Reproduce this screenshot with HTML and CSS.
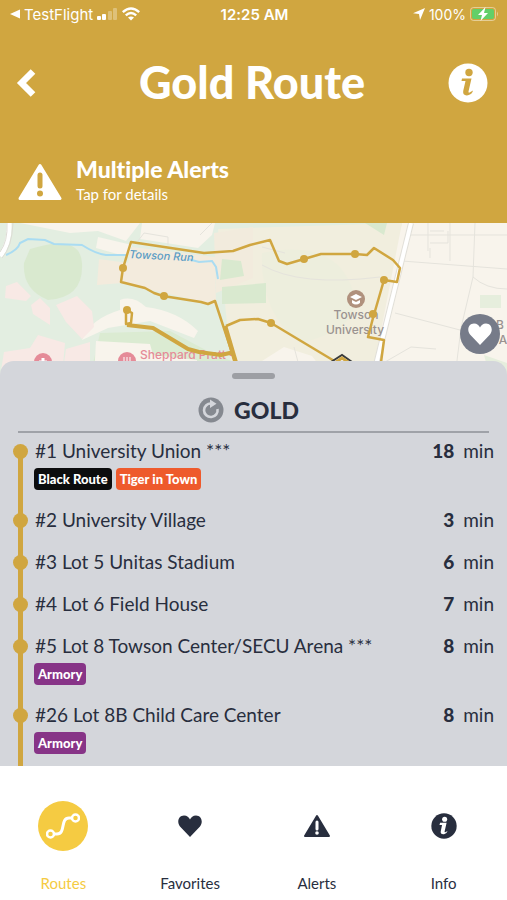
FILE: index.html
```html
<!DOCTYPE html>
<html lang="en">
<head>
    <meta charset="UTF-8">
    <meta name="viewport" content="width=device-width, initial-scale=1.0">
    <title>Gold Route</title>
    <link rel="stylesheet" href="styles.css">
</head>
<body>
    <header class="header">
        <div class="status-bar">
            <div class="status-left">
                <svg width="10" height="10" viewBox="0 0 10 10"><path d="M0 5L10 0.5V9.5Z" fill="#fff"/></svg>
                <span>TestFlight</span>
                <svg width="21" height="14" viewBox="0 0 21 14" fill="#fff">
                    <rect x="0" y="9" width="4" height="4" rx="1"/>
                    <rect x="5" y="7" width="4" height="6" rx="1"/>
                    <rect x="11" y="4" width="4" height="9" rx="1" opacity=".3"/>
                    <rect x="16" y="1" width="4" height="12" rx="1" opacity=".3"/>
                </svg>
                <svg width="18" height="14" viewBox="0 0 18 14" fill="none" stroke="#fff" stroke-width="2.4">
                    <path d="M0.8 5.2Q9 -2.4 17.2 5.2"/>
                    <path d="M3.8 8.4Q9 3.6 14.2 8.4"/>
                    <path d="M6 10.6Q9 8.4 12 10.6L9 13.6Z" fill="#fff" stroke="none"/>
                </svg>
            </div>
            <div class="status-time">12:25 AM</div>
            <div class="status-right">
                <svg width="12" height="12" viewBox="0 0 12 12"><path d="M12 0L7 12L6 6L0 5.2Z" fill="#fff"/></svg>
                <span>100%</span>
                <svg width="29" height="14" viewBox="0 0 29 14">
                    <rect x="0.5" y="0.5" width="25" height="13" rx="3" fill="none" stroke="#fff" opacity=".45"/>
                    <rect x="2" y="2" width="22" height="10" rx="2" fill="#62cf68"/>
                    <path d="M27 4.5Q29 7 27 9.5Z" fill="#fff" opacity=".45"/>
                    <path d="M15.5 0L8 8H12L10.5 14L18 6H14Z" fill="#fff"/>
                </svg>
            </div>
        </div>
        <div class="title-bar">
            <button class="icon-button" aria-label="Back">
                <svg width="20" height="28" viewBox="0 0 20 28" fill="none" stroke="#fff" stroke-width="6.500"><path d="M17 2.500L5.500 14L17 25.500"/></svg>
            </button>
            <h1>Gold Route</h1>
            <button class="icon-button" aria-label="Route info">
                <svg width="40" height="40" viewBox="0 0 40 40">
                    <circle cx="20" cy="20" r="19.500" fill="#fff"/>
                    <g fill="#d0a640"><circle cx="21" cy="9.500" r="3.700"/><path d="M14 15.500H23.500L20.500 28.500Q20.300 30 21.500 29.500L25 27.500Q24.500 31 20 32.300Q14.500 33 15.200 28L17.500 18H13.500Z"/></g>
                </svg>
            </button>
        </div>
        <a class="alert" href="#alerts">
            <svg width="44" height="38" viewBox="0 0 44 38">
                <path d="M22 2.500L42 35.500H2Z" fill="#fff" stroke="#fff" stroke-width="3" stroke-linejoin="round"/>
                <path d="M22 12V23" stroke="#d0a640" stroke-width="5" stroke-linecap="round"/>
                <circle cx="22" cy="30.500" r="3" fill="#d0a640"/>
            </svg>
            <span class="alert-text">
                <strong>Multiple Alerts</strong>
                <span>Tap for details</span>
            </span>
        </a>
    </header>

    <section class="map">
        <svg class="map-canvas" viewBox="0 0 507 154" preserveAspectRatio="xMidYMin slice" aria-label="Route map">
            <rect width="507" height="154" fill="#f8f4ec"/>
            <!-- campus and parks -->
            <path d="M0 0H402L360 154H0Z" fill="#e3eee1"/>
            <path d="M218 6L402 0L372 154H232Z" fill="#f1eede"/>
            <path d="M132 24L215 34L216 82L122 60L97 62L99 36L128 40Z" fill="#f3ebdd"/>
            <path d="M214 10L253 4V55L216 70Z" fill="#f2ebdd"/>
            <path d="M262 30Q330 16 350 60T300 120Q260 90 262 30Z" fill="#edeedd"/>
            <path d="M30 26Q80 10 82 40Q84 75 48 77Q22 66 24 40Z" fill="#d9e9cf"/>
            <path d="M222 36L241 38L244 53L220 57ZM222 64L266 60V80L222 81ZM365 0H387L384 12Z" fill="#d9e9cf"/>
            <path d="M100 110L170 108L215 132L232 138V154H90Z" fill="#dbebd2"/>
            <path d="M20 0H140L126 18L98 8L70 10Z" fill="#f8f4ec"/>
            <path d="M98 14L132 22L128 34L96 25ZM142 0H215L212 12L198 25L140 16Z" fill="#f8f4ec"/>
            <path d="M120 77Q133 72 146 84Q178 88 198 108L194 115L150 98L108 105L82 117Q90 96 120 87Z" fill="#f8f4ec"/>
            <path d="M96 118L150 121L153 132L197 137V154H94ZM262 138L284 124L312 133L328 154H262Z" fill="#f8f4ec"/>
            <path d="M6 63L17 59L31 73L26 78L5 75ZM31 82L40 75L50 85V102L33 91ZM56 82L77 73L92 88L94 104L82 116L66 99ZM4 129L30 125L38 112L65 120L62 154H0ZM66 126L90 119V154H62Z" fill="#f8e9e5"/>
            <path d="M480 72H501V85H480ZM484 132L507 140V154H490Z" fill="#e6eedd"/>
            <!-- side streets -->
            <path d="M9 0Q10 20 0 33" fill="none" stroke="#fff" stroke-width="5"/>
            <path d="M7 0Q8 18 0 29M13 0Q12 24 2 35" fill="none" stroke="#dddcd5" stroke-width="1"/>
            <g fill="none" stroke="#e5e3dc" stroke-width="1">
                <path d="M411 12H507M402 38L507 46M473 54Q486 66 507 66M395 90L460 107M385 139L411 124L436 126M428 0V28M450 0V38M430 20H448V8M475 0L473 54L461 105L455 154M138 18L144 10L168 14V22M262 24L285 30M212 0L200 12"/>
                <path d="M262 42Q300 64 380 54M294 124L302 154"/>
                <path d="M430 8H444M430 25V35"/>
            </g>
            <path d="M411 0L373 154" stroke="#e1dfd8" stroke-width="6"/>
            <path d="M411 0L373 154" stroke="#fff" stroke-width="4"/>
            <path d="M6 32Q18 27 20 20L28 16L45 17L54 21L82 22Q96 31 106 32H128M188 36L199 39L212 38L216 44L218 56" fill="none" stroke="#aadcf2" stroke-width="2"/>
            <text class="map-water" x="129" y="35" transform="rotate(3 129 35)">Towson Run</text>
            <text class="map-hospital" x="140" y="136">Sheppard Pratt -</text>
            <circle cx="43" cy="139" r="9" fill="#e58b98"/><path d="M43 135V145M39 139H47" stroke="#fff" stroke-width="3"/>
            <circle cx="127" cy="138" r="9" fill="#e58b98"/><path d="M124 134V140M127 134V142M130 134V140" stroke="#fff" stroke-width="1"/>
            <circle cx="356" cy="76" r="9" fill="#b0917d"/>
            <path d="M350 74L356 71L362 74L356 77ZM352 77L356 79L360 77V80Q356 83 352 80Z" fill="#fff"/>
            <g class="map-place"><text x="356" y="96">Towson</text><text x="355" y="111">University</text></g>
            <g class="map-place"><text x="500" y="106">B</text><text x="503" y="121">A</text></g>
            <!-- gold route -->
            <g fill="none" stroke="#d0a640" stroke-width="2.500" stroke-linejoin="round">
                <path d="M240 154L215 78L208 81L201 79L163 73L154 70L145 65L121 59L123 45L131 19L204 30L233 28L250 22L270 17L279 38L287 41L304 36L321 31L355 31L367 32L374 25L393 37L400 45L397 59L384 57L373 95L368 114L384 117L379 154"/>
                <path d="M226 103L240 97L258 96L271 100L336 139" />
                <path d="M127 87L132 90L131 100L126 101V88"/>
                <path d="M127 102L153 105L188 126L199 129L221 132L234 129" stroke-width="4"/>
                <path d="M225 103L240 154" stroke-width="4.500"/>
            </g>
            <path d="M331 139L342 132L352 139V154H331Z" fill="#f8f4ec" stroke="#3a3c3c" stroke-width="2"/>
            <path d="M333 141L342 135L351 141" fill="none" stroke="#d0a640" stroke-width="3"/>
            <g fill="#d0a640">
                <circle cx="123" cy="45" r="4"/><circle cx="164" cy="73" r="4"/><circle cx="127" cy="87" r="4"/>
                <circle cx="304" cy="36" r="4"/><circle cx="355" cy="31" r="4"/><circle cx="384" cy="57" r="4"/>
                <circle cx="373" cy="91" r="4"/><circle cx="271" cy="100" r="4"/>
            </g>
        </svg>
        <button class="favorite" aria-label="Add to favorites">
            <svg width="24" height="22" viewBox="0 0 24 22"><path d="M12 22L2 11.500C-1.500 7 0.500 0.500 6 0.500C9 0.500 11 2.500 12 4.500C13 2.500 15 0.500 18 0.500C23.500 0.500 25.500 7 22 11.500Z" fill="#fff"/></svg>
        </button>
    </section>

    <main class="sheet">
        <div class="handle"></div>
        <div class="sheet-title">
            <svg width="26" height="26" viewBox="0 0 26 26">
                <circle cx="13" cy="13" r="12.500" fill="#858990"/>
                <path d="M13.500 6.500A6.800 6.800 0 1 0 19.500 12" fill="none" stroke="#d4d6db" stroke-width="2.600"/>
                <path d="M12 2.500L18.500 6.800L12 11Z" fill="#d4d6db"/>
            </svg>
            <h2>GOLD</h2>
        </div>
        <ul class="stops">
            <li class="stop">
                <div class="track"></div>
                <div class="stop-info">
                    <div class="stop-name">#1 University Union ***</div>
                    <div class="tags"><span class="tag black">Black Route</span><span class="tag orange">Tiger in Town</span></div>
                </div>
                <div class="eta"><b>18</b> min</div>
            </li>
            <li class="stop">
                <div class="track"></div>
                <div class="stop-info"><div class="stop-name">#2 University Village</div></div>
                <div class="eta"><b>3</b> min</div>
            </li>
            <li class="stop">
                <div class="track"></div>
                <div class="stop-info"><div class="stop-name">#3 Lot 5 Unitas Stadium</div></div>
                <div class="eta"><b>6</b> min</div>
            </li>
            <li class="stop">
                <div class="track"></div>
                <div class="stop-info"><div class="stop-name">#4 Lot 6 Field House</div></div>
                <div class="eta"><b>7</b> min</div>
            </li>
            <li class="stop">
                <div class="track"></div>
                <div class="stop-info">
                    <div class="stop-name">#5 Lot 8 Towson Center/SECU Arena ***</div>
                    <div class="tags"><span class="tag purple">Armory</span></div>
                </div>
                <div class="eta"><b>8</b> min</div>
            </li>
            <li class="stop">
                <div class="track"></div>
                <div class="stop-info">
                    <div class="stop-name">#26 Lot 8B Child Care Center</div>
                    <div class="tags"><span class="tag purple">Armory</span></div>
                </div>
                <div class="eta"><b>8</b> min</div>
            </li>
        </ul>
    </main>

    <nav class="tabs">
        <a class="tab active" href="#routes">
            <span class="tab-icon">
                <svg width="34" height="26" viewBox="0 0 34 26" fill="none" stroke="#fff" stroke-width="2.500">
                    <circle cx="4.500" cy="21" r="3.500"/><circle cx="29.500" cy="5" r="3.500"/>
                    <path d="M8 21H11C20 21 14 5 23 5H26" stroke-width="3"/>
                </svg>
            </span>
            Routes
        </a>
        <a class="tab" href="#favorites">
            <span class="tab-icon">
                <svg width="26" height="22" viewBox="0 0 24 22"><path d="M12 22L2 11.500C-1.500 7 0.500 0.500 6 0.500C9 0.500 11 2.500 12 4.500C13 2.500 15 0.500 18 0.500C23.500 0.500 25.500 7 22 11.500Z" fill="#282e3e"/></svg>
            </span>
            Favorites
        </a>
        <a class="tab" href="#alerts">
            <span class="tab-icon">
                <svg width="28" height="24" viewBox="0 0 28 24">
                    <path d="M14 2L26 22H2Z" fill="#282e3e" stroke="#282e3e" stroke-width="2" stroke-linejoin="round"/>
                    <path d="M14 8V15" stroke="#fff" stroke-width="3" stroke-linecap="round"/>
                    <circle cx="14" cy="19" r="1.800" fill="#fff"/>
                </svg>
            </span>
            Alerts
        </a>
        <a class="tab" href="#info">
            <span class="tab-icon">
                <svg width="26" height="26" viewBox="0 0 40 40">
                    <circle cx="20" cy="20" r="19.500" fill="#282e3e"/>
                    <g fill="#fff"><circle cx="21" cy="9.500" r="3.900"/><path d="M14 15H24L21 28Q20.500 30 22 29.500L25.500 27.500Q24.500 31.500 20 32.500Q14 33 15 28L17 18.500H13Z"/></g>
                </svg>
            </span>
            Info
        </a>
    </nav>
</body>
</html>
```

FILE: styles.css
```css
* {
    box-sizing: border-box;
}

body {
    margin: 0;
    min-height: 100vh;
    display: flex;
    flex-direction: column;
    font-family: Lato, sans-serif;
    font-variant-ligatures: none;
    color: #282e3e;
    background-color: #fff;
}

svg {
    display: block;
    flex-shrink: 0;
}

h1, h2, ul {
    margin: 0;
    padding: 0;
}

a {
    text-decoration: none;
}

button {
    border: 0;
    padding: 0;
    cursor: pointer;
}

.header {
    background-color: #d0a640;
    color: #fff;
}

.status-bar {
    display: grid;
    grid-template-columns: 1fr auto 1fr;
    align-items: center;
    height: 28px;
    padding: 0 8px 0 10px;
    font-family: Inter, sans-serif;
    font-size: 15px;
}

.status-left,
.status-right {
    display: flex;
    align-items: center;
    gap: 4px;
}

.status-right {
    justify-content: flex-end;
    font-size: 14px;
}

.status-time {
    font-weight: 600;
}

.title-bar {
    display: flex;
    align-items: center;
    justify-content: space-between;
    height: 110px;
    padding: 0 19px 0 16px;
}

.title-bar h1 {
    padding-bottom: 2px;
    font-size: 45px;
    font-weight: 900;
    line-height: 52px;
}

.icon-button {
    display: flex;
    width: 40px;
    background: none;
}

.alert {
    display: flex;
    align-items: center;
    gap: 14px;
    height: 85px;
    padding: 3px 18px 0;
    color: #fff;
}

.alert-text {
    display: flex;
    flex-direction: column;
    padding-bottom: 4px;
    font-size: 15px;
    line-height: 22px;
}

.alert-text strong {
    font-size: 23px;
    font-weight: 900;
    line-height: 28px;
}

.map {
    position: relative;
    height: 154px;
}

.map-canvas {
    width: 100%;
    height: 100%;
}

.map-canvas text {
    font-family: Inter, sans-serif;
    font-size: 12px;
    font-weight: 500;
}

.map-canvas .map-water {
    fill: #5a9cc4;
    font-size: 11px;
    font-style: italic;
}

.map-hospital {
    fill: #e58b98;
}

.map-place {
    fill: #9a9290;
    text-anchor: middle;
}

.favorite {
    position: absolute;
    top: 91px;
    right: 7px;
    display: flex;
    align-items: center;
    justify-content: center;
    width: 40px;
    height: 40px;
    border-radius: 50%;
    background-color: #767b89;
}

.sheet {
    position: relative;
    flex: 1;
    display: flex;
    flex-direction: column;
    margin-top: -16px;
    border-radius: 14px 14px 0 0;
    background-color: #d4d6db;
}

.handle {
    width: 43px;
    height: 6px;
    margin: 12px auto 0;
    border-radius: 3px;
    background-color: #9d9fa4;
}

.sheet-title {
    display: flex;
    align-items: center;
    justify-content: center;
    gap: 10px;
    height: 54px;
    margin: 0 18px;
    padding: 14px 10px 4px 0;
    border-bottom: 2px solid #9fa2a8;
}

.sheet-title h2 {
    font-size: 23px;
    font-weight: 900;
    line-height: 28px;
}

.stops {
    flex: 1;
    padding: 6px 13px 0 18px;
    list-style: none;
}

.stop {
    display: flex;
    font-size: 19px;
    line-height: 24px;
}

.track {
    position: relative;
    width: 5px;
    background-color: #d0a640;
}

.track::before {
    content: "";
    position: absolute;
    top: 5px;
    left: -5px;
    width: 15px;
    height: 15px;
    border-radius: 50%;
    background-color: #d0a640;
}

.stop:first-child .track {
    margin-top: 12px;
}

.stop:first-child .track::before {
    top: -7px;
}

.stop-info {
    flex: 1;
    padding: 0 0 18px 11px;
}

.stop:last-child .stop-info {
    padding-bottom: 12px;
}

.stop-name {
    padding-left: 1px;
}

.tags {
    display: flex;
    gap: 4px;
    margin-top: 5px;
}

.tag {
    padding: 0 4px;
    border-radius: 4px;
    color: #fff;
    font-size: 13px;
    font-weight: 900;
    line-height: 22px;
}

.black {
    background-color: #0c0d0e;
}

.orange {
    background-color: #ee5a2c;
}

.purple {
    background-color: #873487;
}

.eta b {
    margin-right: 4px;
    font-weight: 900;
}

.tabs {
    display: grid;
    grid-template-columns: repeat(4, 1fr);
    height: 134px;
    background-color: #fff;
}

.tab {
    display: flex;
    flex-direction: column;
    align-items: center;
    gap: 22px;
    padding-top: 35px;
    color: #282e3e;
    font-size: 15px;
    line-height: 20px;
}

.tab-icon {
    display: flex;
    align-items: center;
    justify-content: center;
    width: 50px;
    height: 50px;
    border-radius: 50%;
}

.active {
    color: #f5cb42;
}

.active .tab-icon {
    background-color: #f5cb42;
}
```
